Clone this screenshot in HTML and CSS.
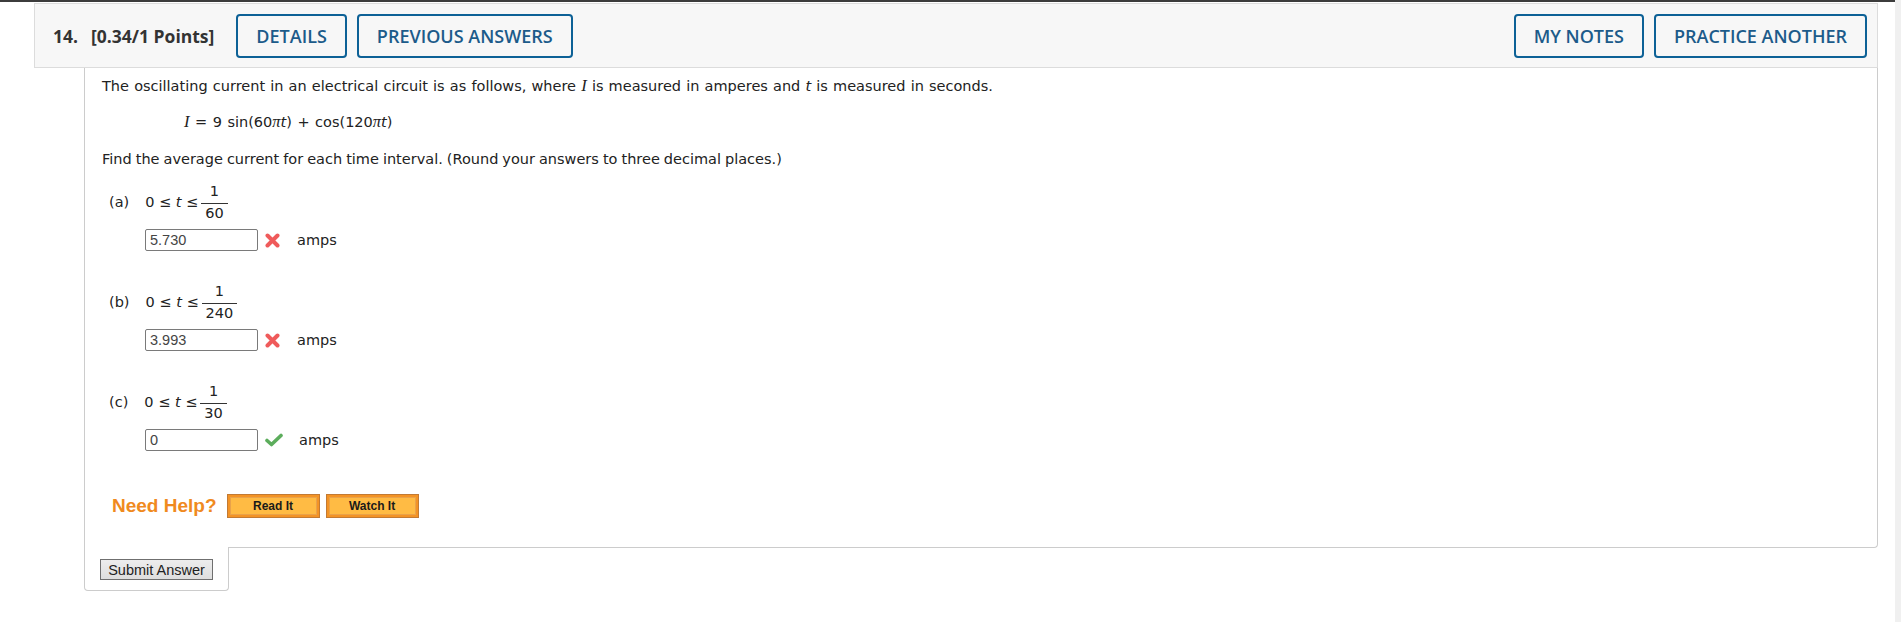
FILE: index.html
```html
<!DOCTYPE html>
<html>
<head>
<meta charset="utf-8">
<link rel="stylesheet" href="styles.css">
</head>
<body>
<div class="page">
  <div class="main">
    <div class="q-head">
      <div class="q-title"><span class="q-num">14.</span><span class="q-pts">[0.34/1 Points]</span></div>
      <div class="q-btns">
        <span class="hbtn">DETAILS</span>
        <span class="hbtn">PREVIOUS ANSWERS</span>
      </div>
      <div class="q-spacer"></div>
      <div class="q-btns">
        <span class="hbtn">MY NOTES</span>
        <span class="hbtn">PRACTICE ANOTHER</span>
      </div>
    </div>
    <div class="q-body">
      <p class="txt l1">The oscillating current in an electrical circuit is as follows, where <i class="mv">I</i> is measured in amperes and <i>t</i> is measured in seconds.</p>
      <p class="txt formula"><i class="mv">I</i> = 9 sin(60<i class="pi">π</i><i>t</i>) + cos(120<i class="pi">π</i><i>t</i>)</p>
      <p class="txt find">Find the average current for each time interval. (Round your answers to three decimal places.)</p>

      <div class="part">
        <div class="part-q">
          <span class="plabel">(a)</span>
          <span class="ineq">0 ≤ <i>t</i> ≤</span>
          <span class="frac"><span class="num">1</span><span class="den">60</span></span>
        </div>
        <div class="ans-row">
          <span class="ans-box">5.730</span>
          <svg class="ico-x" width="15" height="15" viewBox="0 0 15 15"><path d="M2.5 2.5 L12.5 12.5 M12.5 2.5 L2.5 12.5" stroke="#ef5b5b" stroke-width="4" stroke-linecap="round"/></svg>
          <span class="unit">amps</span>
        </div>
      </div>

      <div class="part">
        <div class="part-q">
          <span class="plabel">(b)</span>
          <span class="ineq">0 ≤ <i>t</i> ≤</span>
          <span class="frac"><span class="num">1</span><span class="den">240</span></span>
        </div>
        <div class="ans-row">
          <span class="ans-box">3.993</span>
          <svg class="ico-x" width="15" height="15" viewBox="0 0 15 15"><path d="M2.5 2.5 L12.5 12.5 M12.5 2.5 L2.5 12.5" stroke="#ef5b5b" stroke-width="4" stroke-linecap="round"/></svg>
          <span class="unit">amps</span>
        </div>
      </div>

      <div class="part">
        <div class="part-q">
          <span class="plabel">(c)</span>
          <span class="ineq">0 ≤ <i>t</i> ≤</span>
          <span class="frac"><span class="num">1</span><span class="den">30</span></span>
        </div>
        <div class="ans-row">
          <span class="ans-box">0</span>
          <svg class="ico-ok" width="18" height="14" viewBox="0 0 18 14"><path d="M2 7.5 L6.5 11.5 L16 2.5" fill="none" stroke="#5cad5c" stroke-width="3.6" stroke-linecap="round" stroke-linejoin="round"/></svg>
          <span class="unit unit-ok">amps</span>
        </div>
      </div>

      <div class="help">
        <span class="help-lbl">Need Help?</span>
        <span class="obtn">Read It</span>
        <span class="obtn">Watch It</span>
      </div>
    </div>
    <div class="submit-tab">
      <span class="submit-btn">Submit Answer</span>
    </div>
  </div>
  <div class="scroll"></div>
</div>
</body>
</html>
```

FILE: styles.css
```css
html, body {
  margin: 0;
  padding: 0;
  background: #ffffff;
}
.page {
  display: flex;
  height: 622px;
}
.main {
  flex: 1;
  border-top: 2px solid #3c3c3c;
  padding: 1px 17px 0 34px;
}
.scroll {
  width: 6px;
  background: #f0f0f0;
}
.q-head {
  display: flex;
  align-items: center;
  height: 63px;
  box-sizing: content-box;
  padding: 0 10px 0 18px;
  background: #f7f7f7;
  border: 1px solid #dcdcdc;
}
.q-title {
  font-family: "Open Sans", sans-serif;
  font-weight: 700;
  font-size: 17.5px;
  color: #333333;
  margin-right: 22px;
}
.q-num {
  margin-right: 13px;
}
.q-btns {
  display: flex;
  gap: 10px;
}
.q-spacer {
  flex: 1;
}
.hbtn {
  display: flex;
  align-items: center;
  height: 40px;
  padding: 0 18px;
  border: 2px solid #0d6196;
  border-radius: 4px;
  font-family: "Open Sans", sans-serif;
  font-weight: 600;
  font-size: 18px;
  color: #1c5b8a;
}
.q-body {
  margin-left: 50px;
  border: 1px solid #cccccc;
  border-top: none;
  border-bottom-right-radius: 4px;
  padding: 9px 17px 29px 17px;
  font-family: "DejaVu Sans", Verdana, sans-serif;
  font-size: 14.5px;
  color: #222222;
}
.txt {
  margin: 0;
  line-height: 18px;
}
.l1 {
  word-spacing: 0.55px;
}
.mv {
  font-family: "Liberation Serif", serif;
  font-size: 16.5px;
}
.pi {
  font-family: "Liberation Serif", serif;
  font-size: 16.5px;
}
.formula {
  margin-top: 18px;
  padding-left: 82px;
  word-spacing: 0.9px;
}
.find {
  margin-top: 19px;
  word-spacing: -0.6px;
}
.part {
  margin-top: 15px;
}
.part + .part {
  margin-top: 32px;
}
.part-q {
  display: flex;
  align-items: center;
  padding-left: 7px;
}
.plabel {
  margin-right: 16px;
}
.ineq {
  margin-right: 3px;
}
.frac {
  display: inline-flex;
  flex-direction: column;
  align-items: stretch;
  text-align: center;
}
.num {
  line-height: 16px;
  padding: 0 4px 4px;
  border-bottom: 1px solid #333;
}
.den {
  line-height: 16px;
  padding: 1px 4px 0;
}
.ans-row {
  display: flex;
  align-items: center;
  margin-top: 8px;
  padding-left: 43px;
}
.ans-box {
  box-sizing: border-box;
  width: 113px;
  height: 22px;
  border: 1px solid #7a7a7a;
  border-radius: 2px;
  padding: 0 4px;
  font-family: "Liberation Sans", Arial, sans-serif;
  font-size: 14.5px;
  line-height: 20px;
  color: #444444;
}
.ico-x {
  margin-left: 7px;
  margin-right: 17px;
}
.ico-ok {
  margin-left: 7px;
  margin-right: 16px;
}
.unit {
  line-height: 18px;
}
.help {
  display: flex;
  align-items: center;
  margin-top: 43px;
  padding-left: 10px;
}
.help-lbl {
  font-family: "Liberation Sans", Arial, sans-serif;
  font-weight: 700;
  font-size: 19px;
  color: #f08a1e;
  margin-right: 10px;
}
.obtn {
  box-sizing: border-box;
  width: 93px;
  height: 24px;
  margin-right: 6px;
  display: flex;
  align-items: center;
  justify-content: center;
  border: 1px solid #c27a34;
  background: #ffbb44;
  box-shadow: inset 0 0 0 2px #f39325, inset 0 0 0 3px #e9a24a;
  font-family: "Liberation Sans", Arial, sans-serif;
  font-weight: 700;
  font-size: 12px;
  color: #1a1a1a;
}
.submit-tab {
  box-sizing: border-box;
  width: 145px;
  margin-left: 50px;
  margin-top: -1px;
  background: #ffffff;
  border: 1px solid #cccccc;
  border-top: none;
  border-radius: 0 0 4px 4px;
  padding: 12px 0 10px 15px;
}
.submit-btn {
  display: flex;
  align-items: center;
  justify-content: center;
  box-sizing: border-box;
  width: 113px;
  height: 21px;
  border: 1px solid #6f6f6f;
  background: linear-gradient(#ededed, #dedede);
  font-family: "Liberation Sans", Arial, sans-serif;
  font-size: 14.5px;
  color: #222222;
}
```
